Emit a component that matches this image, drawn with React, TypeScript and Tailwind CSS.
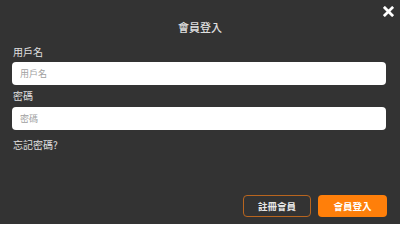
import React from "react";

const font = { fontFamily: '"Noto Sans CJK TC", "Noto Sans", sans-serif' };

const LoginDialog = () => {
  return (
    <div
      className="relative w-[400px] h-[224px] bg-[#333333] flex flex-col px-3 overflow-hidden"
      style={font}
    >
      {/* close button */}
      <button className="absolute right-[6px] top-[6px] w-[11px] h-[11px] flex items-center justify-center">
        <svg viewBox="0 0 12 12" className="w-[11px] h-[11px]">
          <path d="M2 2 L10 10 M10 2 L2 10" stroke="#ffffff" strokeWidth="3" strokeLinecap="square" />
        </svg>
      </button>

      <div className="mt-[21px] h-[12px] leading-[12px] text-[11px] font-medium text-[#e0e0e0] text-center">
        會員登入
      </div>

      <div className="mt-[14px] h-[10px] leading-[10px] text-[10px] text-[#e0e0e0] pl-px">用戶名</div>
      <input
        className="mt-[5px] h-[23px] w-[374px] bg-white rounded-[4px] px-2 text-[9px] text-[#333] placeholder:text-[#a0a0a0] outline-none"
        placeholder="用戶名"
      />

      <div className="mt-[6px] h-[10px] leading-[10px] text-[10px] text-[#e0e0e0] pl-px">密碼</div>
      <input
        type="password"
        className="mt-[6px] h-[23px] w-[374px] bg-white rounded-[4px] px-2 text-[9px] text-[#333] placeholder:text-[#a0a0a0] outline-none"
        placeholder="密碼"
      />

      <div className="mt-[10px] h-[10px] leading-[10px] text-[10px] text-[#e0e0e0] pl-px">忘記密碼?</div>

      <div className="mt-auto mb-[7px] flex justify-end gap-[7px] pr-px">
        <button className="w-[68px] h-[22px] rounded-[4px] border border-[#b8651f] text-[9.5px] font-bold text-[#e6e6e6]">
          註冊會員
        </button>
        <button className="w-[69px] h-[22px] rounded-[4px] bg-[#ff7f0a] text-[9.5px] font-bold text-white">
          會員登入
        </button>
      </div>
    </div>
  );
};

export default function App() {
  return <LoginDialog />;
}
